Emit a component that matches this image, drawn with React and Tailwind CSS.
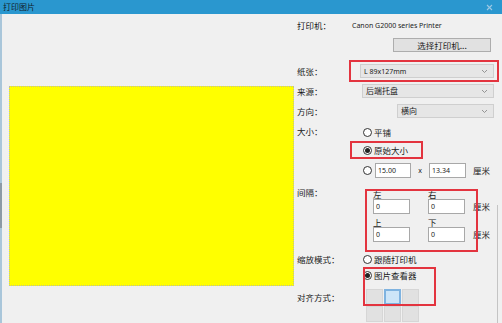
import React from "react";

const cjk = { fontFamily: '"Noto Sans CJK SC", "Noto Sans", sans-serif' };
const lat = { fontFamily: '"Noto Sans", "Noto Sans CJK SC", sans-serif' };

function Chevron() {
  return (
    <svg width="7" height="5" viewBox="0 0 7 5" className="shrink-0">
      <path d="M1 1 L3.5 3.5 L6 1" fill="none" stroke="#8a8a8a" strokeWidth="0.9" />
    </svg>
  );
}

function Select({ children, className, latin }) {
  return (
    <div className={`h-[14px] bg-[#e6e6e6] border border-[#cfcfcf] flex items-center justify-between pl-[3px] pr-[5px] ${className}`}>
      <span className={`${latin ? "text-[7px]" : "text-[8px]"} leading-none text-[#222]`} style={latin ? lat : cjk}>{children}</span>
      <Chevron />
    </div>
  );
}

function Radio({ checked }) {
  return (
    <div className="w-[9px] h-[9px] rounded-full border border-[#333] bg-white flex items-center justify-center shrink-0">
      {checked && <div className="w-[5px] h-[5px] rounded-full bg-[#222]" />}
    </div>
  );
}

function Input({ value, className }) {
  return (
    <div className={`h-[15px] bg-white border border-[#a8a8a8] flex items-center pl-[2px] ${className}`}>
      <span className="text-[7px] leading-none text-[#222]" style={lat}>{value}</span>
    </div>
  );
}

function Label({ children, className = "" }) {
  return (
    <span className={`text-[8.5px] leading-none text-[#1a1a1a] ${className}`} style={cjk}>{children}</span>
  );
}

function RedBox({ className }) {
  return <div className={`absolute border-2 border-[#e3343f] ${className}`} />;
}

export default function App() {
  return (
    <div className="w-[502px] h-[323px] bg-[#f0f0f0] relative overflow-hidden flex flex-col">
      {/* title bar */}
      <div className="h-[14px] bg-[#2a97cf] flex items-center justify-between pl-[3px] pr-[9px] shrink-0">
        <span className="text-[8px] leading-none text-[#10202c]" style={cjk}>打印图片</span>
        <svg width="7" height="7" viewBox="0 0 7 7">
          <path d="M1 1 L6 6 M6 1 L1 6" stroke="#9cc8e4" strokeWidth="1.1" />
        </svg>
      </div>

      <div className="flex flex-1 border-l-2 border-[#a9c6da]">
        {/* preview */}
        <div className="pl-[7px] pt-[72px] shrink-0">
          <div className="w-[285px] h-[200px] bg-[#ffff00] border border-dotted border-[#bdbd9a]" />
        </div>

        {/* form */}
        <div className="flex flex-col pl-[3px] flex-1">
          <div className="mt-[4px] h-[14px] flex items-center">
            <Label className="w-[55px]">打印机：</Label>
            <span className="text-[7px] leading-none text-[#222]" style={lat}>Canon G2000 series Printer</span>
          </div>
          <div className="mt-[6px] h-[14px] flex">
            <div className="ml-[96px] w-[98px] h-[14px] bg-[#e1e1e1] border border-[#adadad] flex items-center justify-center">
              <span className="text-[8.5px] leading-none text-[#222]" style={cjk}>选择打印机...</span>
            </div>
          </div>
          <div className="mt-[12px] h-[14px] flex items-center">
            <Label className="w-[63px]">纸张：</Label>
            <Select className="w-[134px]" latin>L 89x127mm</Select>
          </div>
          <div className="mt-[6px] h-[14px] flex items-center">
            <Label className="w-[65px]">来源：</Label>
            <Select className="w-[132px]">后端托盘</Select>
          </div>
          <div className="mt-[6px] h-[14px] flex items-center">
            <Label className="w-[100px]">方向：</Label>
            <Select className="w-[97px]">横向</Select>
          </div>
          <div className="mt-[7px] h-[14px] flex items-center">
            <Label className="w-[66px] self-start mt-[2px]">大小：</Label>
            <Radio />
            <Label className="ml-[2px]">平铺</Label>
          </div>
          <div className="mt-[4px] h-[14px] flex items-center">
            <div className="w-[66px]" />
            <Radio checked />
            <Label className="ml-[2px]">原始大小</Label>
          </div>
          <div className="mt-[6px] h-[15px] flex items-center">
            <div className="w-[66px]" />
            <Radio />
            <Input value="15.00" className="ml-[3px] w-[36px]" />
            <span className="w-[18px] text-center text-[7px] leading-none text-[#222]" style={lat}>x</span>
            <Input value="13.34" className="w-[37px]" />
            <Label className="ml-[7px]">厘米</Label>
          </div>
          <div className="mt-[10px] flex">
            <Label className="w-[76px]">间隔：</Label>
            <div className="grid grid-cols-[37px_18px_37px_8px_auto] grid-rows-[11px_15px_13px_15px] items-center">
              <Label className="self-end mb-[1px]">左</Label>
              <div />
              <Label className="self-end mb-[1px]">右</Label>
              <div />
              <div />
              <Input value="0" className="w-[37px]" />
              <div />
              <Input value="0" className="w-[37px]" />
              <div />
              <Label>厘米</Label>
              <Label className="self-end mb-[1px]">上</Label>
              <div />
              <Label className="self-end mb-[1px]">下</Label>
              <div />
              <div />
              <Input value="0" className="w-[37px]" />
              <div />
              <Input value="0" className="w-[37px]" />
              <div />
              <Label>厘米</Label>
            </div>
          </div>
          <div className="mt-[10px] h-[14px] flex items-center">
            <Label className="w-[66px]">缩放模式：</Label>
            <Radio />
            <Label className="ml-[2px]">跟随打印机</Label>
          </div>
          <div className="mt-[2px] h-[14px] flex items-center">
            <div className="w-[66px]" />
            <Radio checked />
            <Label className="ml-[2px]">图片查看器</Label>
          </div>
          <div className="mt-[7px] flex items-start">
            <Label className="w-[69px] mt-[4px]">对齐方式：</Label>
            <div className="grid grid-cols-[17px_17px_17px] grid-rows-[16px_16px] gap-[1px]">
              <div className="bg-[#e1e1e1] border border-[#d6d6d6]" />
              <div className="bg-[#cde5f8] border-2 border-[#7fb3e0]" />
              <div className="bg-[#e1e1e1] border border-[#d6d6d6]" />
              <div className="bg-[#e1e1e1] border border-[#d6d6d6]" />
              <div className="bg-[#e1e1e1] border border-[#d6d6d6]" />
              <div className="bg-[#e1e1e1] border border-[#d6d6d6]" />
            </div>
          </div>
        </div>
      </div>

      {/* annotation boxes */}
      <RedBox className="left-[349px] top-[60px] w-[150px] h-[22px]" />
      <RedBox className="left-[350px] top-[141px] w-[73px] h-[18px]" />
      <RedBox className="left-[365px] top-[189px] w-[113px] h-[63px]" />
      <RedBox className="left-[363px] top-[267px] w-[73px] h-[39px]" />

      {/* scrollbar hints */}
      <div className="absolute left-0 top-[183px] w-[2px] h-[45px] bg-[#8c9aa6]" />
      <div className="absolute left-[497px] top-[205px] w-[1px] h-[118px] bg-[#c4c4c4]" />
    </div>
  );
}
